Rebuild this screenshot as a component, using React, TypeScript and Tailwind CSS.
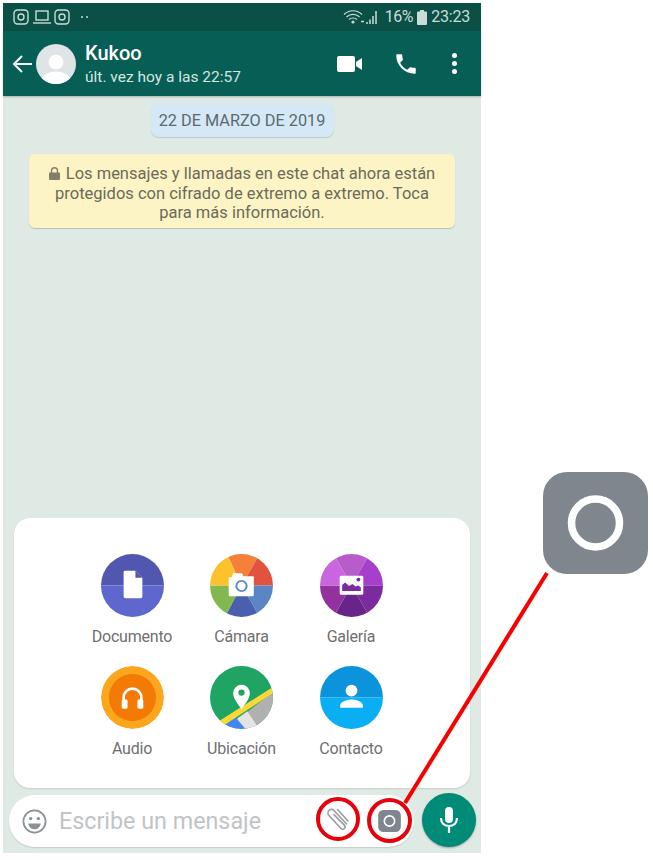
import { ReactNode } from "react";

// pie wedge from center of a 64x64 circle, angles in degrees clockwise from top
function wedge(a: number, b: number) {
  const p = (d: number) => {
    const r = ((d - 90) * Math.PI) / 180;
    return `${(32 + 33 * Math.cos(r)).toFixed(2)} ${(32 + 33 * Math.sin(r)).toFixed(2)}`;
  };
  return `M32 32L${p(a)}A33 33 0 0 1 ${p(b)}Z`;
}

function Disc({ children }: { children: ReactNode }) {
  return (
    <svg viewBox="0 0 64 64" className="w-[63px] h-[63px]">
      <defs>
        <clipPath id="disc">
          <circle cx="32" cy="32" r="32" />
        </clipPath>
      </defs>
      <g clipPath="url(#disc)">{children}</g>
    </svg>
  );
}

function DocumentoIcon() {
  return (
    <Disc>
      <rect width="64" height="32" fill="#5157ae" />
      <rect y="32" width="64" height="32" fill="#5f66cd" />
      <path d="M23 18.5a1.5 1.5 0 0 1 1.5-1.5H35l7 7v19.5a1.5 1.5 0 0 1-1.5 1.5h-16a1.5 1.5 0 0 1-1.5-1.5Z" fill="#fff" />
      <path d="M35 17l7 7h-7Z" fill="#5157ae" />
    </Disc>
  );
}

function CamaraIcon() {
  const parts: [number, number, string][] = [
    [-25, 30, "#f4803a"],
    [30, 90, "#e2533f"],
    [90, 150, "#5b86c6"],
    [150, 208, "#4a5fae"],
    [208, 270, "#82b84f"],
    [270, 335, "#fcc12d"],
  ];
  return (
    <Disc>
      {parts.map(([a, b, c]) => (
        <path key={c} d={wedge(a, b)} fill={c} />
      ))}
      <path d="M20 23.5h2l1.5-4h9l1.5 3h9.5a1 1 0 0 1 1 1V42a1 1 0 0 1-1 1H20a1 1 0 0 1-1-1V24.5a1 1 0 0 1 1-1Z" fill="#fff" />
      <circle cx="32" cy="32.5" r="5.2" fill="none" stroke="#5b86c6" strokeWidth="2" />
    </Disc>
  );
}

function GaleriaIcon() {
  const parts: [number, number, string][] = [
    [-30, 30, "#b95ccb"],
    [30, 90, "#a63fcb"],
    [90, 150, "#7c2b9e"],
    [150, 210, "#682488"],
    [210, 270, "#93319f"],
    [270, 330, "#c965de"],
  ];
  return (
    <Disc>
      {parts.map(([a, b, c]) => (
        <path key={c} d={wedge(a, b)} fill={c} />
      ))}
      <rect x="20" y="22" width="24" height="19.5" rx="1.5" fill="#fff" />
      <path d="M22.5 37.5v-6l3-2.5 4 3.5 3.5-2 3 2.5 3-1 2.5 2v3.5Z" fill="#7c2b9e" />
      <circle cx="39" cy="26" r="2" fill="#7c2b9e" />
    </Disc>
  );
}

function AudioIcon() {
  return (
    <Disc>
      <circle cx="32" cy="32" r="32" fill="#fba61d" />
      <circle cx="32" cy="32" r="24" fill="#f27a05" />
      <path d="M23 36v-4a9 9 0 0 1 18 0v4" fill="none" stroke="#fff" strokeWidth="2.6" />
      <rect x="21" y="34" width="6" height="9.5" rx="1.5" fill="#fff" />
      <rect x="37" y="34" width="6" height="9.5" rx="1.5" fill="#fff" />
    </Disc>
  );
}

function UbicacionIcon() {
  return (
    <Disc>
      <rect width="64" height="64" fill="#1fa463" />
      <path d="M64 26L16 64H64Z" fill="#b0b0b0" />
      <path d="M38 46l12 18H24l4-11Z" fill="#e4e4e4" />
      <path d="M26 52l10 12H10Z" fill="#4285f4" />
      <path d="M66 20L6 58l4 5 56-37Z" fill="#fdd835" />
      <path d="M32 44.5c-1.5-4-8.5-10-8.5-17a8.5 8.5 0 0 1 17 0c0 7-7 13-8.5 17Z" fill="#fff" />
      <circle cx="32" cy="27" r="3.2" fill="#1fa463" />
    </Disc>
  );
}

function ContactoIcon() {
  return (
    <Disc>
      <rect width="64" height="32" fill="#0b94dc" />
      <rect y="32" width="64" height="32" fill="#0aaef5" />
      <circle cx="32" cy="25" r="6" fill="#fff" />
      <path d="M20.5 42.5v-2.5c0-4 8-6 11.5-6s11.5 2 11.5 6v2.5Z" fill="#fff" />
    </Disc>
  );
}

function Attach({ icon, label }: { icon: ReactNode; label: string }) {
  return (
    <div className="flex flex-col items-center w-[109.5px]">
      {icon}
      <div className="mt-[9px] text-[16px] leading-[22px] text-[#6f6f6f] tracking-[-0.2px]">{label}</div>
    </div>
  );
}

function CameraGlyph({ className }: { className: string }) {
  return (
    <svg viewBox="0 0 105 102" className={className}>
      <rect width="105" height="102" rx="24" fill="#80868d" />
      <circle cx="52.5" cy="51" r="24" fill="none" stroke="#fff" strokeWidth="7.5" />
    </svg>
  );
}

export default function App() {
  return (
    <div className="relative w-[653px] h-[860px] bg-white pl-[3px] pt-[3px] font-['Roboto',sans-serif]">
      <div className="flex flex-col w-[478px] h-[850px] bg-[#dfeae5]">
        {/* status bar */}
        <div className="flex items-center h-[28px] pl-[10px] pr-[11px] bg-[#0a5046] text-[#c9dcd7]">
          <svg viewBox="0 0 16 16" className="w-[16px] h-[16px]" fill="none" stroke="currentColor" strokeWidth="1.4">
            <rect x="1" y="1" width="14" height="14" rx="3.5" />
            <circle cx="8" cy="8" r="3" />
          </svg>
          <svg viewBox="0 0 18 16" className="ml-[4px] w-[18px] h-[16px]" fill="none" stroke="currentColor" strokeWidth="1.4">
            <rect x="3" y="2" width="12" height="9" />
            <path d="M0 14h18" />
          </svg>
          <svg viewBox="0 0 16 16" className="ml-[3px] w-[16px] h-[16px]" fill="none" stroke="currentColor" strokeWidth="1.4">
            <rect x="1" y="1" width="14" height="14" rx="3.5" />
            <circle cx="8" cy="8" r="3" />
          </svg>
          <div className="flex gap-[3px] ml-[11px]">
            <span className="w-[2px] h-[2px] rounded-full bg-current" />
            <span className="w-[2px] h-[2px] rounded-full bg-current" />
          </div>
          <svg viewBox="0 0 38 16" className="ml-auto w-[38px] h-[16px]" fill="none" stroke="currentColor" strokeWidth="1.2">
            <path d="M1 5.5c5-5 13-5 18 0M3.5 8c3.5-3.5 9.5-3.5 13 0M6 10.5c2-2 6-2 8 0" />
            <circle cx="10" cy="13" r="1" fill="currentColor" />
            <path d="M18 12.5h3M24 15v-2M27 15v-4.5M30 15V7M33 15V2" strokeWidth="1.5" />
          </svg>
          <span className="ml-[4px] text-[16px] leading-none tracking-[-0.4px]">16%</span>
          <svg viewBox="0 0 10 15" className="ml-[4px] w-[10px] h-[15px]" fill="currentColor">
            <path d="M3 0h4v1.500h2a1 1 0 0 1 1 1V14a1 1 0 0 1-1 1H1a1 1 0 0 1-1-1V2.500a1 1 0 0 1 1-1h2Z" />
          </svg>
          <span className="ml-[4px] text-[16px] leading-none tracking-[-0.2px]">23:23</span>
        </div>

        {/* header */}
        <div className="flex items-center h-[65px] pl-[9px] pr-[24px] bg-[#075e54] text-white shadow-[0_1px_2px_rgba(0,0,0,0.25)]">
          <svg viewBox="0 0 20 18" className="w-[20px] h-[18px]" fill="none" stroke="#fff" strokeWidth="2">
            <path d="M20 9H2M10 1L2 9l8 8" />
          </svg>
          <svg viewBox="0 0 40 40" className="ml-[4px] w-[40px] h-[40px]">
            <defs>
              <clipPath id="avatar">
                <circle cx="20" cy="20" r="20" />
              </clipPath>
            </defs>
            <g clipPath="url(#avatar)">
              <rect width="40" height="40" fill="#dfe5e7" />
              <circle cx="20" cy="18" r="7.500" fill="#fff" />
              <ellipse cx="20" cy="36" rx="14" ry="8.500" fill="#fff" />
            </g>
          </svg>
          <div className="ml-[9px] flex flex-col">
            <span className="text-[20px] leading-[26px] font-medium">Kukoo</span>
            <span className="text-[15.5px] leading-[22px] text-[#d5e6e2]">últ. vez hoy a las 22:57</span>
          </div>
          <svg viewBox="0 0 25 16" className="ml-auto w-[25px] h-[16px]" fill="#fff">
            <rect width="18" height="16" rx="2" />
            <path d="M19 6l6-4v12l-6-4Z" />
          </svg>
          <svg viewBox="0 0 24 24" className="ml-[31px] w-[26px] h-[26px]" fill="#fff">
            <path d="M6.620 10.790c1.440 2.830 3.760 5.140 6.590 6.590l2.200-2.200c.27-.27.67-.36 1.020-.24 1.120.37 2.330.57 3.570.57.550 0 1 .45 1 1V20c0 .55-.45 1-1 1C10.610 21 3 13.390 3 4c0-.55.45-1 1-1h3.500c.55 0 1 .45 1 1 0 1.250.2 2.450.57 3.570.110.350.030.740-.25 1.020l-2.200 2.200Z" />
          </svg>
          <div className="ml-[33px] flex flex-col gap-[3px]">
            <span className="w-[5px] h-[5px] rounded-full bg-white" />
            <span className="w-[5px] h-[5px] rounded-full bg-white" />
            <span className="w-[5px] h-[5px] rounded-full bg-white" />
          </div>
        </div>

        {/* chat */}
        <div className="flex flex-1 flex-col items-center pt-[7px] pb-[6px]">
          <div className="flex items-center justify-center w-[183px] h-[34px] pt-[3px] rounded-[8px] bg-[#d4e9f5] text-[16.3px] text-[#5b6a70] shadow-[0_1px_1px_rgba(0,0,0,0.15)]">
            22 DE MARZO DE 2019
          </div>
          <div className="mt-[17px] w-[426px] h-[74px] rounded-[6px] bg-[#fdf4c5] pt-[10px] text-center text-[16.5px] leading-[19.500px] text-[#6c6a58] shadow-[0_1px_1px_rgba(0,0,0,0.18)]">
            <svg viewBox="0 0 12 14" className="inline-block mr-[6px] mb-[3px] w-[11px] h-[13px]" fill="#857f68">
              <path d="M2 6V4a4 4 0 0 1 8 0v2h1a1 1 0 0 1 1 1v6a1 1 0 0 1-1 1H1a1 1 0 0 1-1-1V7a1 1 0 0 1 1-1Zm1.500 0h5V4a2.500 2.500 0 0 0-5 0Z" />
            </svg>
            Los mensajes y llamadas en este chat ahora están
            <br />
            protegidos con cifrado de extremo a extremo. Toca
            <br />
            para más información.
          </div>

          <div className="mt-auto flex flex-col gap-[18px] w-[456px] h-[270px] pt-[36px] rounded-[16px] bg-white shadow-[0_1px_2px_rgba(0,0,0,0.12)]">
            <div className="flex justify-center pr-[1px]">
              <Attach icon={<DocumentoIcon />} label="Documento" />
              <Attach icon={<CamaraIcon />} label="Cámara" />
              <Attach icon={<GaleriaIcon />} label="Galería" />
            </div>
            <div className="flex justify-center pr-[1px]">
              <Attach icon={<AudioIcon />} label="Audio" />
              <Attach icon={<UbicacionIcon />} label="Ubicación" />
              <Attach icon={<ContactoIcon />} label="Contacto" />
            </div>
          </div>

          {/* input row */}
          <div className="mt-[5px] flex items-center w-full pl-[6px] pr-[5px]">
            <div className="mt-[2px] flex items-center w-[405px] h-[52px] pl-[13px] rounded-[26px] bg-white shadow-[0_1px_1px_rgba(0,0,0,0.12)]">
              <svg viewBox="0 0 26 26" className="w-[25px] h-[25px]" fill="none" stroke="#8b9296" strokeWidth="1.800">
                <circle cx="13" cy="13" r="11.500" />
                <circle cx="9" cy="10" r="1.800" fill="#8b9296" stroke="none" />
                <circle cx="17" cy="10" r="1.800" fill="#8b9296" stroke="none" />
                <path d="M6.500 15h13c-.5 4-3.500 6-6.500 6s-6-2-6.500-6Z" fill="#8b9296" stroke="none" />
              </svg>
              <span className="ml-[12px] text-[23.300px] text-[#c0c4c5]">Escribe un mensaje</span>
            </div>
            <div className="ml-auto flex items-center justify-center w-[54px] h-[54px] rounded-full bg-[#008a78] shadow-[0_1px_2px_rgba(0,0,0,0.3)]">
              <svg viewBox="0 0 20 28" className="w-[20px] h-[28px]" fill="none" stroke="#fff" strokeWidth="2.200">
                <rect x="6" y="1" width="8" height="16" rx="4" fill="#fff" stroke="none" />
                <path d="M2 12c0 5 3.500 8 8 8s8-3 8-8M10 20v7" />
              </svg>
            </div>
          </div>
        </div>
      </div>

      {/* callout overlays */}
      <svg viewBox="0 0 653 860" className="absolute left-0 top-0 w-[653px] h-[860px]" fill="none">
        <path d="M547 573L405 803" stroke="#f80000" strokeWidth="4" />
      </svg>
      <div className="absolute left-[316px] top-[797px] flex items-center justify-center w-[44px] h-[44px] rounded-full border-[4px] border-[#e8000d]">
        <svg viewBox="0 0 26 26" className="w-[26px] h-[26px]" fill="none" stroke="#9a9fa3" strokeWidth="1.700">
          <path d="M22 18.500L9 4.500a3.500 3.500 0 0 0-5 5l12 13a2.300 2.300 0 0 0 3.300-3.300L8.500 8.200" />
          <path d="M23.500 15.500L12 3" />
        </svg>
      </div>
      <div className="absolute left-[367px] top-[798px] flex items-center justify-center w-[45px] h-[45px] rounded-full border-[4px] border-[#e8000d]">
        <CameraGlyph className="w-[23px] h-[22px]" />
      </div>
      <CameraGlyph className="absolute left-[543px] top-[472px] w-[105px] h-[102px]" />
    </div>
  );
}
